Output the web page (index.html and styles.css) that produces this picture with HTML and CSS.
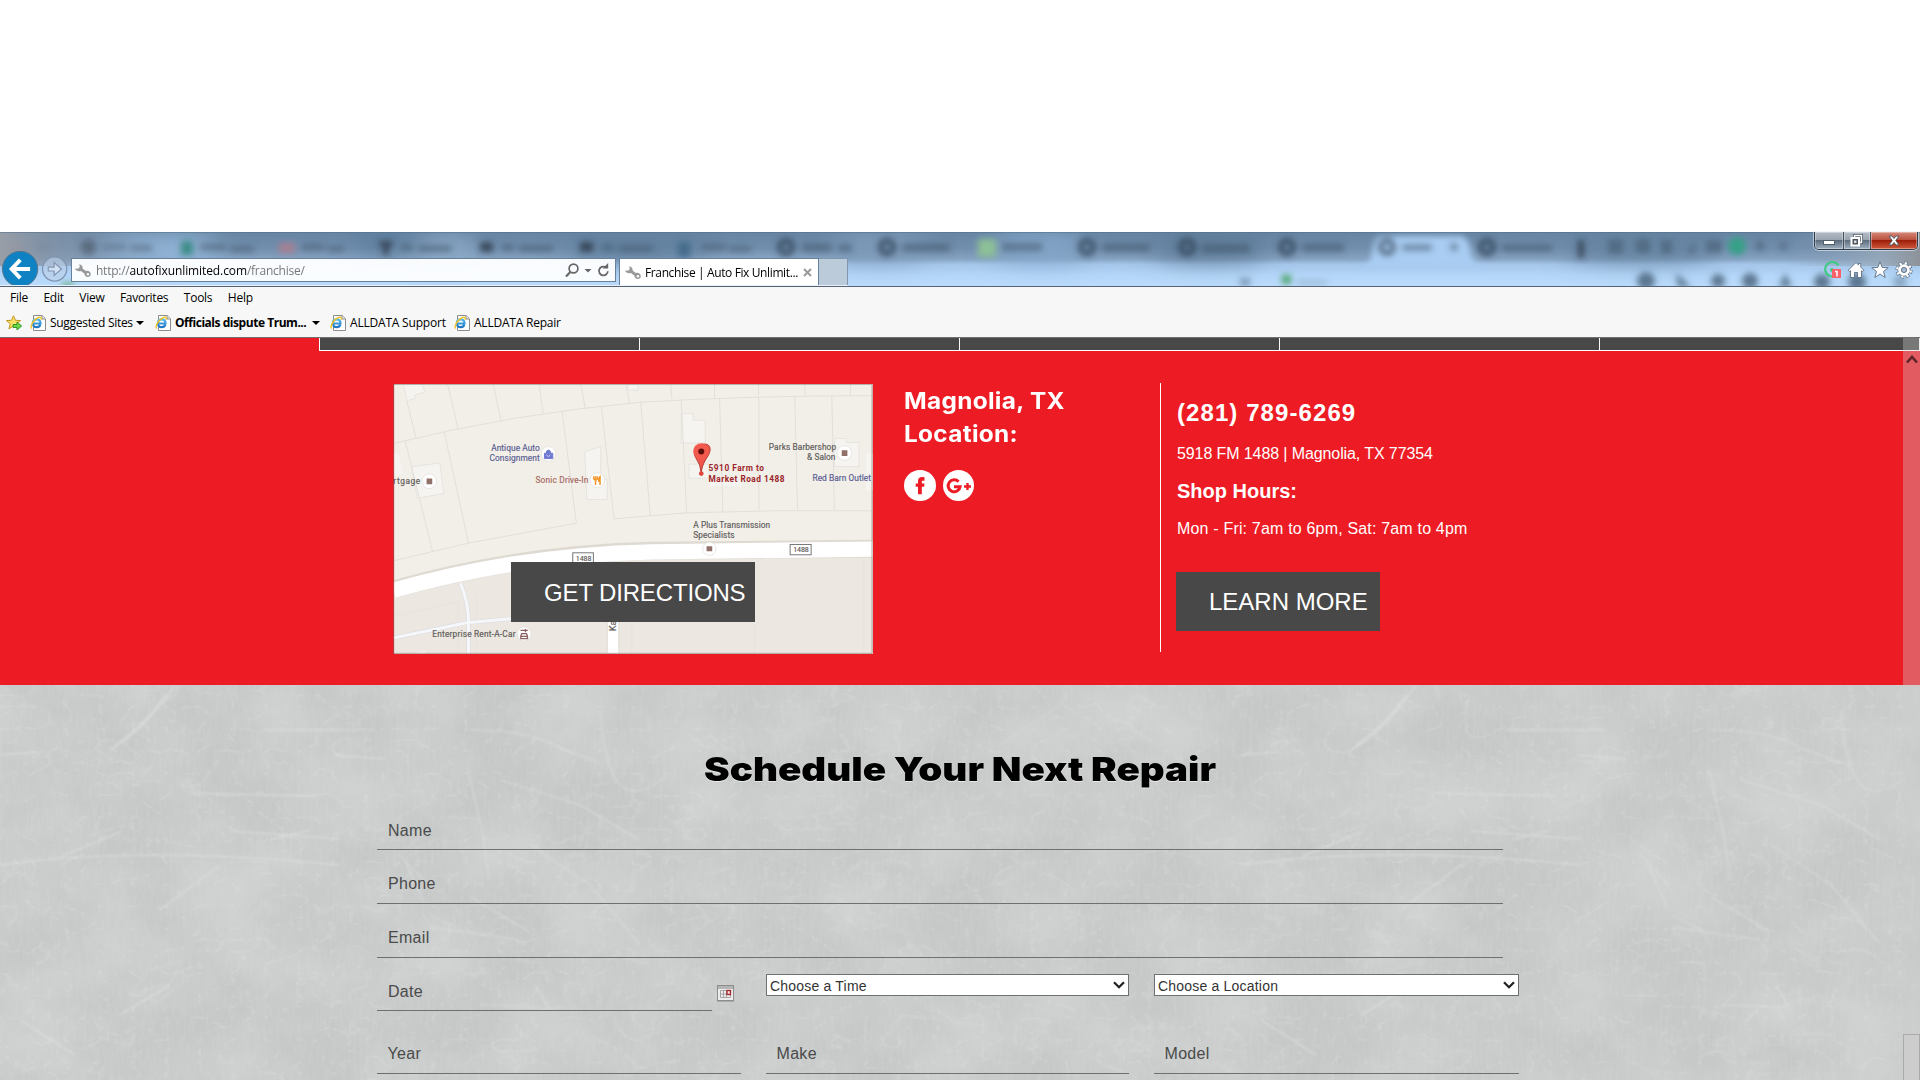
FILE: index.html
```html
<!DOCTYPE html>
<html lang="en">
<head>
<meta charset="utf-8">
<title>Franchise | Auto Fix Unlimited</title>
<link rel="stylesheet" href="styles.css">
</head>
<body>
<svg class="defs" width="0" height="0" aria-hidden="true">
  <defs>
    <linearGradient id="ring" x1="0" y1="0" x2="0" y2="1"><stop offset="0" stop-color="#56b7ec"/><stop offset="1" stop-color="#1f77c4"/></linearGradient>
    <symbol id="ie" viewBox="0 0 16 16">
      <path d="M3.500.5h8.700l3.300 3.300v11.700h-12z" fill="#fff" stroke="#8d8d8d"/>
      <path d="M12 .5v3.500h3.500" fill="#e8e8e8" stroke="#8d8d8d"/>
      <path d="M10.300 9.700c-.5 1.600-1.800 2.500-3.500 2.500-2.300 0-3.900-1.600-3.900-3.900s1.600-3.900 3.900-3.900 3.700 1.600 3.700 4.100H3.500" fill="none" stroke="url(#ring)" stroke-width="2.200"/>
      <path d="M1.800 13.300c-1.500-.4-.6-3.800 1.700-6.800C6 3.200 9.700 1.300 11 2.600c.5.500.4 1.300.1 2.100" fill="none" stroke="#f4c11c" stroke-width="1.300"/>
    </symbol>
    <symbol id="wrench" viewBox="0 0 16 13">
      <path d="M4.200.2C6.200.4 8 1.900 7.600 4.500l3.200 2.600c2.300-.9 5 .6 5 3.100 0 1.700-1.400 2.700-3 2.700-2.100 0-3.400-1.400-3.300-3.200L6 6.900C3.600 7.700.8 6.700 0 4.500l3 .3L4.800 3z" fill="#999"/>
      <circle cx="12.900" cy="10.200" r="1.200" fill="#fff"/>
    </symbol>
  </defs>
</svg>

<div class="blank"></div>

<header class="titlebar">
  <svg class="glass" width="1920" height="54" viewBox="0 0 1920 54">
    <defs>
      <linearGradient id="sky" x1="0" y1="0" x2="0" y2="1">
        <stop offset="0" stop-color="#6785a3"/><stop offset=".3" stop-color="#728fae"/><stop offset=".5" stop-color="#86a3c2"/><stop offset=".6" stop-color="#a5c6ea"/><stop offset=".8" stop-color="#b4d6f8"/><stop offset="1" stop-color="#badbfb"/>
      </linearGradient>
      <linearGradient id="edge" x1="0" y1="0" x2="1" y2="0">
        <stop offset="0" stop-color="#999ea6"/><stop offset=".025" stop-color="#8795a6" stop-opacity=".7"/><stop offset=".09" stop-color="#7b97b5" stop-opacity="0"/><stop offset=".93" stop-color="#8096ac" stop-opacity="0"/><stop offset=".98" stop-color="#98a8b7" stop-opacity=".8"/><stop offset="1" stop-color="#8d9298"/>
      </linearGradient>
      <filter id="b3" x="-5%" y="-50%" width="110%" height="200%"><feGaussianBlur stdDeviation="3"/></filter>
      <filter id="b12" x="-50%" y="-50%" width="200%" height="200%"><feGaussianBlur stdDeviation="12"/></filter>
    </defs>
    <rect width="1920" height="54" fill="url(#sky)"/>
    <g filter="url(#b12)">
      <ellipse cx="160" cy="18" rx="60" ry="16" fill="#94b7da"/><ellipse cx="440" cy="20" rx="40" ry="16" fill="#8dabc8"/>
      <ellipse cx="390" cy="8" rx="40" ry="12" fill="#5b7b9c"/><ellipse cx="640" cy="14" rx="80" ry="14" fill="#607f9d"/>
      <ellipse cx="880" cy="14" rx="50" ry="14" fill="#7f9cbb"/><ellipse cx="1040" cy="15" rx="50" ry="14" fill="#86a9cd"/>
      <ellipse cx="1210" cy="14" rx="60" ry="14" fill="#5c7995"/><ellipse cx="1640" cy="14" rx="80" ry="14" fill="#64829f"/>
      <ellipse cx="740" cy="52" rx="70" ry="7" fill="#bfdefd"/>
    </g>
    <g filter="url(#b3)">
      <path d="M1362 36q8-2 10-14 2-18 10-18h78q9 0 11 18 2 11 12 14z" fill="#a9cdf3"/>
      <g fill="none" stroke="#34475b" stroke-width="5.500" opacity=".85">
        <circle cx="786" cy="15" r="6.500"/><circle cx="887" cy="15" r="6.500"/><circle cx="1087" cy="15" r="6.500"/><circle cx="1187" cy="15" r="6.500"/><circle cx="1287" cy="15" r="6.500"/><circle cx="1387" cy="15" r="6.500"/><circle cx="1487" cy="15" r="6.500"/>
      </g>
      <g fill="#2e3d4e" opacity=".85"><circle cx="88" cy="15" r="8"/><rect x="379" y="9" width="14" height="5"/><rect x="383" y="9" width="6" height="14"/><rect x="480" y="10" width="13" height="10"/><rect x="580" y="10" width="13" height="10"/><rect x="1578" y="8" width="6" height="18"/></g>
      <rect x="181" y="9" width="12" height="14" fill="#3c8c87"/><rect x="978" y="7" width="18" height="18" fill="#8cc095"/><rect x="10" y="12" width="12" height="9" fill="#a77b8a"/><rect x="279" y="11" width="16" height="10" fill="#a77f92"/><rect x="678" y="10" width="12" height="15" fill="#456c8b"/><circle cx="1737" cy="14" r="9" fill="#35a186"/>
      <g fill="#465a70" opacity=".6">
        <rect x="36" y="12" width="12" height="6"/><rect x="102" y="12" width="24" height="6"/><rect x="130" y="13" width="22" height="6"/><rect x="200" y="12" width="26" height="6"/><rect x="230" y="14" width="24" height="6"/><rect x="302" y="12" width="22" height="6"/><rect x="328" y="14" width="16" height="6"/><rect x="401" y="12" width="12" height="7"/><rect x="418" y="13" width="34" height="7"/><rect x="502" y="12" width="12" height="7"/><rect x="519" y="13" width="34" height="7"/><rect x="602" y="12" width="12" height="7"/><rect x="619" y="13" width="34" height="7"/><rect x="702" y="12" width="24" height="6"/><rect x="729" y="14" width="22" height="6"/>
        <rect x="802" y="11" width="30" height="9"/><rect x="838" y="12" width="14" height="8"/><rect x="902" y="11" width="48" height="9"/><rect x="1002" y="11" width="40" height="8"/><rect x="1102" y="11" width="48" height="9"/><rect x="1202" y="12" width="48" height="9"/><rect x="1302" y="11" width="42" height="9"/><rect x="1402" y="12" width="30" height="7"/><rect x="1502" y="12" width="50" height="8"/>
        <rect x="1450" y="11" width="8" height="8"/><rect x="1608" y="7" width="15" height="15"/><rect x="1636" y="7" width="14" height="14"/><rect x="1661" y="8" width="11" height="14"/><path d="M1687 22l8-14v14z"/><rect x="1706" y="8" width="16" height="13"/><circle cx="1760" cy="14" r="5"/><circle cx="1783" cy="14" r="4"/>
      </g>
      <g fill="#466078" opacity=".8"><circle cx="1646" cy="49" r="9"/><path d="M1676 41l15 14h-13z"/><circle cx="1718" cy="49" r="7"/><circle cx="1750" cy="49" r="8"/><path d="M1785 41l7 14h-13z"/><circle cx="1822" cy="50" r="8"/><circle cx="1857" cy="50" r="9"/><circle cx="1900" cy="50" r="7" opacity=".5"/></g>
      <rect x="1282" y="43" width="9" height="9" fill="#4fa56c"/><rect x="1297" y="48" width="30" height="5" fill="#9cbcd9"/><rect x="1240" y="46" width="10" height="8" fill="#7b97b5"/><rect x="62" y="51" width="12" height="5" fill="#5ea877"/>
    </g>
    <rect width="1920" height="34" fill="url(#edge)"/>
    <rect width="1920" height="1" fill="#516b85" opacity=".5"/>
  </svg>

  <div class="nav-row">
    <svg class="nav-buttons" width="71" height="54" viewBox="0 0 71 54">
      <circle cx="19.800" cy="37.700" r="18" fill="#0f82c4" stroke="#56748f" stroke-width="1"/>
      <path d="M30 37.700H12M20 28.500l-8.800 9.200 8.800 9.200" fill="none" stroke="#fff" stroke-width="4"/>
      <circle cx="55" cy="37.700" r="12.300" fill="#bcd0ea" fill-opacity=".6" stroke="#7f95b2" stroke-width="1.300"/>
      <path d="M48.500 35.700h6v-4.500l7.500 6.500-7.500 6.500v-4.500h-6z" fill="#d2e1f4" stroke="#8094b0" stroke-width="1.200"/>
    </svg>
    <div class="address">
      <svg width="16" height="13"><use href="#wrench"/></svg>
      <span class="url">http://<b>autofixunlimited.com</b>/franchise/</span>
      <svg class="address-tools" width="46" height="16" viewBox="0 0 46 16">
        <circle cx="9.500" cy="6.500" r="4.400" fill="none" stroke="#666" stroke-width="1.700"/><path d="M6.400 10L2 14.500" stroke="#666" stroke-width="2.200"/>
        <path d="M20.500 7h7L24 10.500z" fill="#666"/>
        <path d="M43.800 9.200a4.400 4.400 0 1 1-2.500-4.200" fill="none" stroke="#666" stroke-width="1.800"/><path d="M38.600 6.600h5.600V1z" fill="#666"/>
      </svg>
    </div>
    <div class="tab">
      <svg width="16" height="13"><use href="#wrench"/></svg>
      <span>Franchise | Auto Fix Unlimit...</span>
      <svg width="9" height="9" viewBox="0 0 9 9"><path d="M1 1l7 7M8 1L1 8" stroke="#9a9a9a" stroke-width="2"/></svg>
    </div>
    <div class="new-tab"></div>
  </div>

  <div class="window-side">
    <div class="window-buttons">
      <span class="wb min"><svg width="12" height="5"><rect x=".5" y=".5" width="11" height="4" fill="#fff" stroke="#52606e"/></svg></span>
      <span class="wb max"><svg width="13" height="13" viewBox="0 0 13 13"><path d="M4.500 3V1.500h7v7H10" fill="none" stroke="#49545f" stroke-width="3"/><path d="M4.500 3V1.500h7v7H10" fill="none" stroke="#fff" stroke-width="1.500"/><rect x="1.500" y="4" width="7.500" height="7.500" fill="#49545f" stroke="#fff" stroke-width="2"/><rect x="4" y="6.500" width="2.500" height="2.500" fill="#ddd"/></svg></span>
      <span class="wb close"><svg width="14" height="11" viewBox="0 0 14 11"><path d="M2 1h3l2 2.500L9 1h3L8.800 5.500 12 10H9L7 7.500 5 10H2l3.200-4.500z" fill="#fff" stroke="#545a66"/></svg></span>
    </div>
    <div class="tool-icons">
      <svg width="18" height="18" viewBox="0 0 18 18"><path d="M15.500 4.500a7.200 7.200 0 1 0 1 4.500H11" fill="none" stroke="#3ecb7f" stroke-width="2"/><circle cx="9" cy="9" r="2" fill="#3ecb7f"/><rect x="9" y="8" width="9" height="9" fill="#f9626a"/><path d="M12 10.500h2v5" fill="none" stroke="#fff" stroke-width="1.500"/></svg>
      <svg width="18" height="18" viewBox="0 0 18 18"><path d="M9 1.500L1.200 9.200l1.300 1.300 1-.8v6.800h4v-5h3v5h4V9.700l1 .8 1.300-1.300-3-3V2.500h-2.300v1.400z" fill="#fff" stroke="#5c6d80" stroke-width=".9"/></svg>
      <svg width="18" height="18" viewBox="0 0 18 18"><path d="M9 .8l2.200 5.700 6 .2-4.700 3.800 1.700 6L9 13l-5.200 3.500 1.700-6L.8 6.700l6-.2z" fill="#fff" stroke="#5c6d80" stroke-width=".9"/></svg>
      <svg width="18" height="18" viewBox="0 0 18 18"><circle cx="9" cy="9" r="6.500" fill="#5c6d80"/><circle cx="9" cy="9" r="6.800" fill="none" stroke="#5c6d80" stroke-width="3.600" stroke-dasharray="3.200 2.140"/><circle cx="9" cy="9" r="6.800" fill="none" stroke="#fff" stroke-width="2.400" stroke-dasharray="2.200 3.140" stroke-dashoffset="-.5"/><circle cx="9" cy="9" r="4.300" fill="none" stroke="#fff" stroke-width="3"/><circle cx="9" cy="9" r="2.500" fill="#a9bdd3" stroke="#5c6d80" stroke-width=".8"/></svg>
    </div>
  </div>
</header>

<div class="bars">
  <nav class="menu"><span>File</span><span>Edit</span><span>View</span><span>Favorites</span><span>Tools</span><span>Help</span></nav>
  <nav class="favorites">
    <svg class="fav-star" width="16" height="16" viewBox="0 0 16 16"><path d="M7.500.8l2 4.500 5 .3-3.900 3.200 1.400 5L7.500 11l-4.600 2.800 1.400-5L.5 5.600l5-.3z" fill="#fbe36a" stroke="#c4941b"/><path d="M7 9.500h4V7l4.700 4-4.700 4v-2.500H7z" fill="#69d943" stroke="#2f8f28" stroke-width=".9"/></svg>
    <span class="fav f1"><svg width="16" height="16"><use href="#ie"/></svg><span>Suggested Sites</span><i></i></span>
    <span class="fav f2"><svg width="16" height="16"><use href="#ie"/></svg><span>Officials dispute Trum...</span><i></i></span>
    <span class="fav f3"><svg width="16" height="16"><use href="#ie"/></svg><span>ALLDATA Support</span></span>
    <span class="fav f4"><svg width="16" height="16"><use href="#ie"/></svg><span>ALLDATA Repair</span></span>
  </nav>
</div>

<main class="viewport">
  <div class="site-nav"><span></span><span></span><span></span><span></span><span></span></div>

  <section class="location">
    <div class="map">
      <svg width="480" height="270" viewBox="40 41 1440 811">
        <rect x="40" y="41" width="1440" height="811" fill="#f2efe9"/>
        <path d="M40 660Q400 560 820 545L1480 538V852H40z" fill="#ece8e1"/>
        <g fill="#f5f4f0" stroke="#e6e4de" stroke-width="3">
          <path d="M70 41l12 50 25-7-2-10 30-8-8-25zM745 41v18h30V41zM95 290l85-12 12 92-80 14z"/>
          <path d="M905 130h36v20h36v68h-72zM928 282h60v42h-60zM1365 205h36v12h38v72h-74zM615 245l48-17v100h20v60h-62z"/>
          <path d="M40 250l16 0 14 60-30 10zM85 852l50-8v8zM1460 250h20v110h-20zM985 330h100v18H990z" stroke="none"/>
        </g>
        <g fill="none" stroke="#e2dfda" stroke-width="3">
          <path d="M40 220Q400 130 780 96 1100 76 1480 76M80 90l28 112M203 41l32 135M340 41l24 112M478 41l12 88M603 41l14 75M738 41l12 56M873 41l4 46M1005 41v42M1137 41v34M1276 41v34M1413 41v34"/>
          <path d="M75 210l83 334M193 185l73 334M547 124l43 335L266 519 40 572M665 110l38 336L920 428Q1200 418 1480 422M783 96l29 340M905 88l16 340M1020 84l10 340M1138 80v342M1246 78l8 344M1357 76l8 344"/>
          <path d="M40 740l195-46v158M290 680v172M757 610v242M1125 760v92M1453 575v277" opacity=".6"/>
        </g>
        <path d="M40 658Q420 550 820 542L1480 536" fill="none" stroke="#dedad2" stroke-width="54"/>
        <path d="M40 661Q420 553 820 545L1480 537" fill="none" stroke="#fff" stroke-width="46"/>
        <path d="M242 640q25 60 24 120v92M40 804l220-46 135-12" fill="none" stroke="#dcdde0" stroke-width="13"/>
        <path d="M242 640q25 60 24 120v92M40 804l220-46 135-12" fill="none" stroke="#f6f7fa" stroke-width="9"/>
        <path d="M700 740v112" stroke="#ddd9d2" stroke-width="38"/><path d="M700 740v112" stroke="#fff" stroke-width="32"/>
        <g fill="#fff" stroke="#dddbd6" stroke-width="2"><circle cx="148" cy="333" r="22"/><circle cx="506" cy="251" r="22"/><circle cx="653" cy="330" r="22"/><circle cx="1395" cy="248" r="22"/><circle cx="989" cy="536" r="20"/><circle cx="433" cy="792" r="21"/></g>
        <path d="M140 325h17v17h-17zM1387 240h17v17h-17zM981 528h17v15h-17z" fill="#92706a"/>
        <path d="M494 249h25v16h-25zM500 249v-6q6-7 12 0v6" fill="#7079d2" stroke="#7079d2" stroke-width="3"/><path d="M500 254l6 5 6-5" fill="none" stroke="#fff" stroke-width="2"/>
        <path d="M642 318v8q6 8 11 0v-8M647.500 318v26M661 344v-25q-5 4-4 14h4" fill="none" stroke="#f5962a" stroke-width="4.500"/>
        <path d="M422 781h22M437 777v10M423 798l3-7h14l3 7v8h-20zM424 799h18" fill="none" stroke="#8b6462" stroke-width="4"/>
        <g fill="#fff" stroke="#777" stroke-width="3"><rect x="579" y="548" width="62" height="32"/><rect x="1232" y="523" width="63" height="31"/></g>
        <path d="M965 307q-3-26-15-42c-28-42 60-66 38-13-4 10-20 25-23 55z" fill="#f0574c" stroke="#b2332e" stroke-width="3"/>
        <circle cx="965" cy="243" r="24" fill="#f4594e"/><circle cx="965" cy="244" r="9" fill="#5c0e0b"/><circle cx="965" cy="310" r="7" fill="#e0463d"/>
        <g class="map-text" transform="translate(2 0)">
          <g class="shop"><text x="332" y="242" textLength="146">Antique Auto</text><text x="327" y="272" textLength="151">Consignment</text><text x="1297" y="332" textLength="176">Red Barn Outlet</text></g>
          <text class="food" x="465" y="338" textLength="159">Sonic Drive-In</text>
          <g class="poi"><text x="38" y="342" textLength="81">rtgage</text><text x="1166" y="240" textLength="202">Parks Barbershop</text><text x="1281" y="270" textLength="85">&amp; Salon</text><text x="939" y="474" textLength="231">A Plus Transmission</text><text x="939" y="504" textLength="124">Specialists</text><text x="155" y="800" textLength="250">Enterprise Rent-A-Car</text><text class="shield" x="586" y="572" textLength="47">1488</text><text class="shield" x="1239" y="547" textLength="47">1488</text><text class="street-name" transform="translate(708 784) rotate(-90)">Ka</text></g>
          <g class="pin-text"><text x="985" y="302" textLength="166">5910 Farm to</text><text x="985" y="334" textLength="228">Market Road 1488</text></g>
        </g>
        <path d="M41 42H1478V850H41" fill="none" stroke="#a9a59f" stroke-width="3"/><path d="M41 41v811" stroke="#b3242a" stroke-width="3"/>
      </svg>
      <a class="button directions">GET DIRECTIONS</a>
    </div>
    <div class="place">
      <h3>Magnolia, TX<br>Location:</h3>
      <div class="social">
        <svg width="32" height="31" viewBox="0 0 32 31"><ellipse cx="16" cy="15.500" rx="16" ry="15.500" fill="#fff"/><path d="M20.500 7.200v3.500h-1.700c-.8 0-1 .4-1 1.200v1.600h2.700l-.4 3.300h-2.300v7.400h-3.800v-7.400h-2.300v-3.300H14v-2.300c0-2.700 1.500-4.100 4-4.100z" fill="#ed1c24"/></svg>
        <svg width="31" height="31" viewBox="0 0 31 31"><circle cx="15.500" cy="15.500" r="15.500" fill="#fff"/><path d="M15.600 11.700a6 6 0 1 0 1.500 5H11" fill="none" stroke="#ed1c24" stroke-width="3"/><path d="M21 16.500h7M24.500 13v7" stroke="#ed1c24" stroke-width="2.400"/></svg>
      </div>
    </div>
    <div class="contact">
      <h3>(281) 789-6269</h3>
      <p class="street">5918 FM 1488 | Magnolia, TX 77354</p>
      <h4>Shop Hours:</h4>
      <p class="hours">Mon - Fri: 7am to 6pm, Sat: 7am to 4pm</p>
      <a class="button learn">LEARN MORE</a>
    </div>
  </section>

  <section class="schedule">
    <svg class="concrete" width="1920" height="395" viewBox="0 0 1920 395">
      <defs>
        <filter id="cloud" x="0" y="0" width="100%" height="100%"><feTurbulence type="fractalNoise" baseFrequency=".011 .013" numOctaves="6" seed="21"/><feColorMatrix values="0 0 0 0 .84  0 0 0 0 .85  0 0 0 0 .845  1.600 0 0 0 -.5"/></filter>
        <filter id="grain" x="0" y="0" width="100%" height="100%"><feTurbulence type="fractalNoise" baseFrequency=".3 .06" numOctaves="3" seed="3"/><feColorMatrix values="0 0 0 0 .66  0 0 0 0 .68  0 0 0 0 .67  0 1.500 0 0 -.55"/></filter>
        <filter id="fibre" x="0" y="0" width="100%" height="100%"><feTurbulence type="turbulence" baseFrequency=".03 .045" numOctaves="4" seed="14"/><feColorMatrix values="0 0 0 0 .88  0 0 0 0 .89  0 0 0 0 .885  -4 0 0 0 .75"/></filter>
        <filter id="soft"><feGaussianBlur stdDeviation=".9"/></filter>
        <g id="scratches" fill="none" stroke="#dfe2e1" stroke-width="1.500" filter="url(#soft)">
          <path d="M175 0q-30 45-65 65M165 10q-20 30-50 50M0 70l38-3M265 45h100M335 70l50 4M190 108l125 3M270 155l40-10M60 172l60-25M0 180q140-20 340 0M230 146l110 8M160 225l60-45M120 330l50-30M20 335l55 35"/>
          <path d="M470 45q60 0 90 18l40 15M468 85l15 65 6 45M600 25q5 60 20 75t45-8M500 95l80 25 60 35M398 168l30 32M405 175l20 45M530 160l60 40 50 60M470 212l60 35M430 242l90 13M672 190l-1 40M480 320l60 2M535 300l15 25" stroke-opacity=".8"/>
          <path d="M720 60l60 35M830 100q50-25 90 10M740 160l70 30M850 230l60 20M700 290l50 60M1060 110l30 50M1000 60l60-40M940 215l70-20M1080 285l30 45M1150 70l60 30M780 300l60-20M900 330l80 10" stroke-opacity=".35"/>
          <path d="M130 310l40-12 12-22-35 10zM90 150l35-10-8 14zM430 230l30 14 10 18M250 230l25-20" stroke-opacity=".5"/>
        </g>
      </defs>
      <rect width="1920" height="395" fill="#c5c8c7"/>
      <rect width="1920" height="395" filter="url(#cloud)" opacity=".34"/>
      <rect width="1920" height="395" filter="url(#fibre)" opacity=".28"/>
      <rect width="1920" height="395" filter="url(#grain)" opacity=".4"/>
      <use href="#scratches" opacity=".6"/>
      <use href="#scratches" x="1241" opacity=".6"/>
    </svg>
    <form class="form">
      <h2>Schedule Your Next Repair</h2>
      <div class="field wide name">Name</div>
      <div class="field wide">Phone</div>
      <div class="field wide">Email</div>
      <div class="row dates">
        <div class="date-cell">
          <div class="field date">Date</div>
          <svg width="17" height="17" viewBox="0 0 17 17"><rect x=".5" y=".5" width="16" height="15" fill="#ededed" stroke="#8d8d8d"/><path d="M1 1h15v3H1z" fill="#b5b5b5"/><path d="M0 16.500h17" stroke="#aaa"/><path d="M3.500 5.500h10v7h-10zM6.500 5.500v7M9.500 5.500v7M3.500 9h10" fill="none" stroke="#a5a5a5"/><rect x="10" y="5.500" width="3.500" height="4" fill="#f6dcdc" stroke="#a3252b" stroke-width="1.300"/></svg>
        </div>
        <div class="select"><span>Choose a Time</span><svg width="12" height="8" viewBox="0 0 12 8"><path d="M1 1.200l5 5 5-5" fill="none" stroke="#222" stroke-width="2.300"/></svg></div>
        <div class="select"><span>Choose a Location</span><svg width="12" height="8" viewBox="0 0 12 8"><path d="M1 1.200l5 5 5-5" fill="none" stroke="#222" stroke-width="2.300"/></svg></div>
      </div>
      <div class="row cars"><div class="field">Year</div><div class="field">Make</div><div class="field">Model</div></div>
    </form>
  </section>

  <div class="scrollbar">
    <svg width="12" height="10" viewBox="0 0 12 10"><path d="M1 8.500l5-5.500 5 5.500" fill="none" stroke="#5b2429" stroke-width="2.600"/></svg>
    <div class="thumb"></div>
  </div>
</main>
</body>
</html>
```
FILE: styles.css
```css
* { box-sizing: border-box; }
body {
  margin: 0;
  width: 1920px;
  height: 1080px;
  overflow: hidden;
  display: flex;
  flex-direction: column;
  background: #fff;
  font-family: "Liberation Sans", Arial, sans-serif;
}
svg { display: block; flex: none; }
.defs { position: absolute; }
.blank { height: 232px; flex: none; }

/* Browser chrome */
.titlebar {
  position: relative;
  height: 55px;
  flex: none;
  display: flex;
  justify-content: space-between;
  border-bottom: 1px solid #566274;
  font: 12px "Open Sans", "Noto Sans", sans-serif;
}
.glass { position: absolute; left: 0; top: 0; }
.nav-row { position: relative; display: flex; align-items: flex-start; height: 54px; border-bottom: 1px solid #e6f1fd; }
.nav-buttons { height: 53px; }
.address {
  width: 545px;
  height: 24px;
  margin-top: 26px;
  padding: 0 5px 0 3px;
  display: flex;
  align-items: center;
  gap: 5px;
  border: 1px solid #67819c;
  background: rgba(253, 254, 255, .96);
}
.url { flex: 1; color: #777; letter-spacing: -.24px; }
.url b { font-weight: 400; color: #000; letter-spacing: -.1px; }
.tab {
  width: 200px;
  height: 27px;
  margin: 26px 0 0 3px;
  padding: 0 6px 0 5px;
  display: flex;
  align-items: center;
  gap: 4px;
  border: 1px solid #67819c;
  border-bottom: 0;
  background: #fff;
  white-space: nowrap;
}
.tab span { width: 155px; letter-spacing: -.38px; margin-top: 1px; }
.new-tab { width: 29px; height: 27px; margin-top: 26px; border: 1px solid #7f96ae; border-left: 0; border-bottom: 0; background: #bccbd9; }

.window-side { position: relative; width: 107px; display: flex; flex-direction: column; gap: 12px; }
.window-buttons {
  display: flex;
  width: 104px;
  height: 18px;
  margin-left: 1px;
  border: 1px solid #2e3b48;
  border-top: 0;
  border-radius: 0 0 5px 5px;
  overflow: hidden;
  box-shadow: 0 0 0 1px rgba(230, 240, 250, .6);
}
.wb { display: flex; align-items: center; justify-content: center; border-left: 1px solid #45505c; background: linear-gradient(#b4bcc5, #9aa5b1 45%, #5f6e7e 50%, #9fb0c1); box-shadow: inset 0 0 0 1px rgba(255, 255, 255, .35); }
.min { width: 28px; border-left: 0; padding-top: 3px; }
.max { width: 27px; padding-right: 2px; }
.close { width: 47px; background: linear-gradient(#d68b7c, #bc5240 45%, #9e1d0a 50%, #cf5a3c); }
.tool-icons { display: flex; justify-content: space-between; width: 90px; margin-left: 10px; margin-top: -1px; }

.bars {
  height: 51px;
  flex: none;
  background: #f7f7f7;
  border-bottom: 1px solid #707070;
  font: 12px/24px "Open Sans", "Noto Sans", sans-serif;
  color: #000;
  white-space: nowrap;
}
.menu { display: flex; gap: 15.500px; padding-left: 10px; height: 24px; line-height: 22px; letter-spacing: -.26px; }
.favorites { display: flex; align-items: center; height: 24px; padding-left: 6px; }
.fav-star { margin-right: 8px; }
.fav { display: flex; align-items: center; gap: 4px; letter-spacing: -.22px; }
.fav i { border: 4px solid transparent; border-top-color: #000; border-bottom: 0; margin-left: -1px; }
.f1 { width: 125px; letter-spacing: -.3px; }
.f2 { width: 175px; font-weight: 700; letter-spacing: -.46px; }
.f2 i { margin-left: 2px; }
.f3 { width: 124px; letter-spacing: -.2px; }

/* Web page */
.viewport { position: relative; flex: 1; min-height: 0; overflow: hidden; }
.site-nav { display: flex; height: 13px; background: #ed1c24; padding-left: 319px; }
.site-nav span { width: 320px; border-left: 1px solid #fff; border-bottom: 1px solid #fff; background: #484848; }
.site-nav span:last-child { width: 321px; border-right: 1px solid #fff; }

.location { height: 334px; padding: 33px 0 0 393px; display: flex; background: #ed1c24; color: #fff; }
.location h3, .location h4, .location p { margin: 0; }
.map { position: relative; width: 480px; height: 270px; }
.map-text { font: 25px Roboto, sans-serif; }
.shop { fill: #5a5e92; stroke: #5a5e92; stroke-width: .5; }
.food { fill: #a5695e; stroke: #a5695e; stroke-width: .5; }
.poi { fill: #5f5c5a; stroke: #5f5c5a; stroke-width: .5; }
.shield { font-size: 21px; }
.street-name { font-size: 28px; }
.pin-text { font-weight: 700; fill: #9c2529; }
.button { display: block; background: #484848; color: #fff; font-size: 24px; padding-left: 33px; white-space: nowrap; }
.directions { position: absolute; left: 118px; top: 178px; width: 244px; height: 60px; line-height: 61px; letter-spacing: -.15px; }
.place { width: 288px; height: 269px; margin-top: -1px; padding: 1px 0 0 31px; border-right: 1px solid #fff; }
.place h3 { font: 700 22.500px/33px Inter, sans-serif; letter-spacing: .3px; transform: scaleX(1.082); transform-origin: 0 0; white-space: nowrap; }
.social { display: flex; gap: 7px; margin-top: 20px; }
.contact { padding-left: 15px; }
.contact h3 { padding-top: 14px; font-size: 24px; line-height: 30px; letter-spacing: 1.080px; }
.contact p { font-size: 16px; line-height: 20px; padding-left: 1px; }
.contact h3, .contact h4 { padding-left: 1px; }
.contact .street { margin-top: 16px; letter-spacing: -.1px; }
.contact h4 { margin-top: 15px; font-size: 20px; line-height: 24px; }
.contact .hours { margin-top: 16px; letter-spacing: .18px; }
.learn { width: 204px; height: 59px; line-height: 60px; margin-top: 33px; letter-spacing: 0; }

.schedule { position: relative; height: 395px; background: #c6c9c8; }
.concrete { position: absolute; left: 0; top: 0; }
.form { position: relative; width: 1143px; margin-left: 377px; font-size: 16px; color: #4a4a4a; }
.form h2 {
  margin: 0 0 0 327px;
  padding-top: 60px;
  height: 122px;
  font: 900 33px/48px Inter, sans-serif;
  color: #000;
  text-shadow: 0 1px 0 #e8eaea;
  white-space: nowrap;
  transform: scaleX(1.168);
  transform-origin: 0 0;
}
.field { height: 54px; padding: 14px 0 0 11px; line-height: 40px; letter-spacing: .3px; border-bottom: 1px solid #6d7070; }
.wide { width: 1126px; }
.name { height: 43px; padding-top: 4px; line-height: 39px; }
.row { display: grid; grid-template-columns: 364px 363px 365px; column-gap: 25px; }
.dates { height: 68px; }
.date-cell { display: flex; gap: 5px; }
.date-cell svg { margin-top: 27px; }
.date { width: 335px; height: 53px; }
.select {
  height: 22px;
  margin-top: 16px;
  padding: 0 3px;
  display: flex;
  align-items: center;
  justify-content: space-between;
  border: 1px solid #6f6f6f;
  background: #fff;
  color: #333;
  font-size: 14px;
  letter-spacing: .2px;
}
.select span { padding-top: 2px; }
.select svg { margin-top: -1px; }
.cars .field { height: 48px; padding-top: 8px; padding-left: 10.500px; }

.scrollbar {
  position: absolute;
  right: 0;
  top: 0;
  width: 17px;
  height: 100%;
  padding: 16px 0 0 3px;
  background: rgba(205, 205, 205, .36);
}
.thumb { position: absolute; right: 0; top: 696px; width: 17px; height: 60px; border: 1px solid #a9abab; background: #cdcdcd; }
```
